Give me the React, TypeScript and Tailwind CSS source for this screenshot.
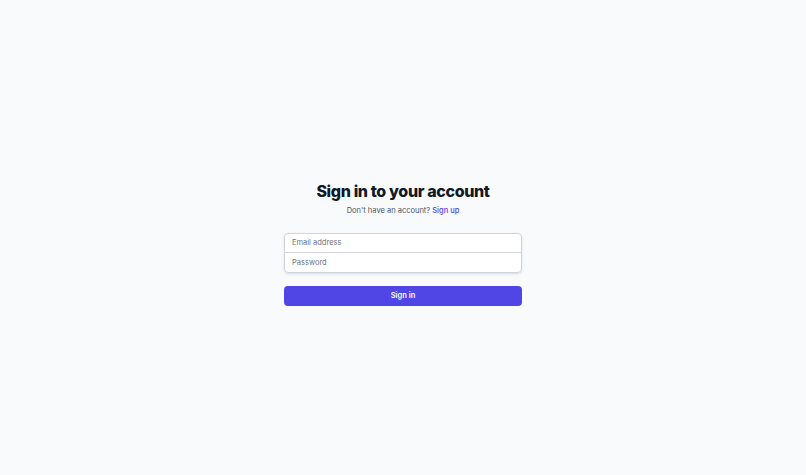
import React, { useState } from 'react';

export default function App() {
  const [email, setEmail] = useState('');
  const [password, setPassword] = useState('');

  return (
    <div
      className="min-h-screen flex items-center justify-center bg-[#f9fafb] pt-[10px]"
      style={{ fontFamily: 'Inter, "Noto Sans", sans-serif' }}
    >
      <div className="w-[238px]">
        {/* Heading */}
        <h2 className="text-center text-[16px] leading-[22px] font-extrabold text-[#111827] tracking-[-0.35px]">
          Sign in to your account
        </h2>
        <p className="mt-[3px] text-center text-[7.5px] leading-[12px] text-[#4b5563]">
          Don't have an account?{' '}
          <a href="#" className="font-medium text-[#4f46e5]">
            Sign up
          </a>
        </p>

        {/* Form */}
        <form className="mt-[16px]" onSubmit={(e) => e.preventDefault()}>
          <div className="rounded-[4px] shadow-sm">
            <input
              type="email"
              value={email}
              onChange={(e) => setEmail(e.target.value)}
              placeholder="Email address"
              className="block w-full h-[20px] px-[7px] text-[7.5px] text-[#111827] placeholder-[#6b7280] bg-white border border-[#d1d5db] rounded-t-[4px] focus:outline-none"
            />
            <input
              type="password"
              value={password}
              onChange={(e) => setPassword(e.target.value)}
              placeholder="Password"
              className="block w-full h-[21px] -mt-px px-[7px] text-[7.5px] text-[#111827] placeholder-[#6b7280] bg-white border border-[#d1d5db] rounded-b-[4px] focus:outline-none"
            />
          </div>

          <button
            type="submit"
            className="mt-[13px] w-full h-[20px] flex items-center justify-center rounded-[4px] bg-[#4f46e5] text-white text-[7.5px] font-semibold"
          >
            Sign in
          </button>
        </form>
      </div>
    </div>
  );
}
